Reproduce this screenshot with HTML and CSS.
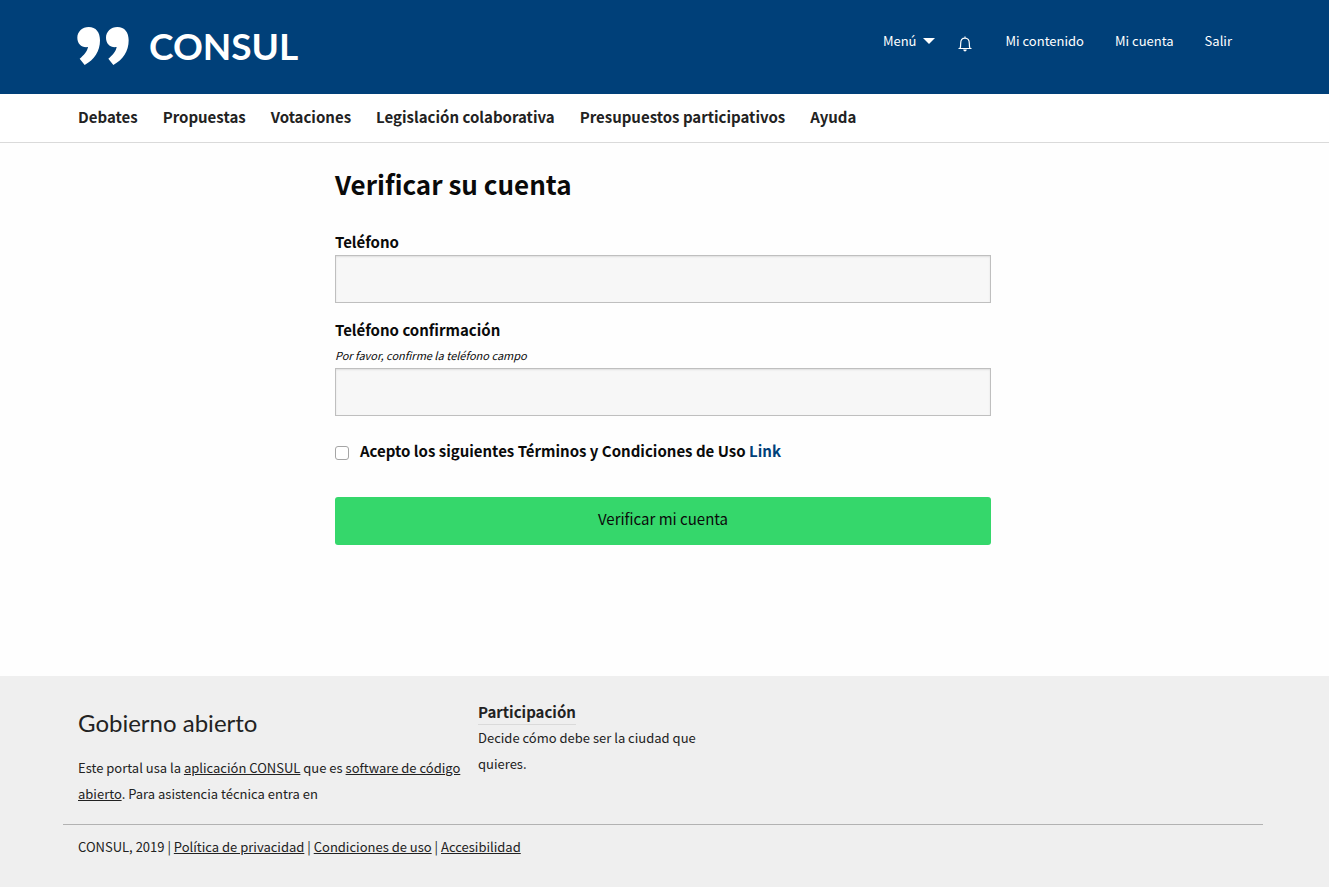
FILE: index.html
```html
<!DOCTYPE html>
<html lang="es">
<head>
<meta charset="utf-8">
<meta name="viewport" content="width=device-width, initial-scale=1">
<title>Verificar su cuenta</title>
<link rel="stylesheet" href="styles.css">
</head>
<body>
<header class="top">
  <div class="row top-row">
    <a class="logo" href="#">
      <svg class="logo-mark" viewBox="54 48 159 120" aria-hidden="true">
        <path id="quote" d="M86 51C108 51 120 67 120 91C120 124 103 150 74 165L59 146C71 136 82 124 84 111C65 114 52 101 52 83C52 65 67 51 86 51Z"/>
        <use href="#quote" x="86"/>
      </svg>
      <span>CONSUL</span>
    </a>
    <nav class="account" aria-label="Cuenta">
      <button class="menu" type="button">Menú <span class="caret"></span></button>
      <a class="bell" href="#" aria-label="Notificaciones">
        <svg viewBox="0 0 14 16" aria-hidden="true">
          <path d="M.5 12.500H13.500M2 12.500C2.700 11.300 2.700 10 2.700 7.200C2.700 4 4.300 2.200 7 2.200S11.300 4 11.300 7.200C11.300 10 11.300 11.300 12 12.500M7 .6V2.200"/>
          <path class="clapper" d="M5.200 13.500H8.800C8.400 16 5.600 16 5.200 13.500Z"/>
        </svg>
      </a>
      <a href="#">Mi contenido</a>
      <a href="#">Mi cuenta</a>
      <a href="#">Salir</a>
    </nav>
  </div>
</header>
<nav class="sections" aria-label="Secciones">
  <div class="row sections-row">
    <a href="#">Debates</a>
    <a href="#">Propuestas</a>
    <a href="#">Votaciones</a>
    <a href="#">Legislación colaborativa</a>
    <a href="#">Presupuestos participativos</a>
    <a href="#">Ayuda</a>
  </div>
</nav>
<main class="row">
  <form class="verify">
    <h1>Verificar su cuenta</h1>
    <label for="phone">Teléfono</label>
    <input class="field" id="phone" type="tel">
    <label for="phone-confirm">Teléfono confirmación</label>
    <p class="hint" id="confirm-hint">Por favor, confirme la teléfono campo</p>
    <input class="field" id="phone-confirm" type="tel" aria-describedby="confirm-hint">
    <div class="terms">
      <input id="terms" type="checkbox">
      <label for="terms">Acepto los siguientes Términos y Condiciones de Uso <a href="#">Link</a></label>
    </div>
    <button class="submit" type="submit">Verificar mi cuenta</button>
  </form>
</main>
<footer class="footer">
  <div class="row footer-row">
    <section class="about">
      <h2>Gobierno abierto</h2>
      <p>Este portal usa la <a href="#">aplicación CONSUL</a> que es <a href="#">software de código abierto</a>. Para asistencia técnica entra en</p>
    </section>
    <section class="participation">
      <a class="participation-title" href="#">Participación</a>
      <p>Decide cómo debe ser la ciudad que quieres.</p>
    </section>
  </div>
  <div class="legal-wrap">
    <div class="legal">CONSUL, 2019 | <a href="#">Política de privacidad</a> | <a href="#">Condiciones de uso</a> | <a href="#">Accesibilidad</a></div>
  </div>
</footer>
</body>
</html>
```
FILE: styles.css
```css
*, *::before, *::after { box-sizing: border-box; }

body {
  display: flex;
  flex-direction: column;
  min-height: 100vh;
  margin: 0;
  background: #fefefe;
  color: #0a0a0a;
  font: 15px/26px "Source Sans Pro", "Noto Sans CJK JP", sans-serif;
}

h1, h2, p { margin: 0; }
a { color: inherit; text-decoration: none; }
button { border: 0; font: inherit; cursor: pointer; }

.row {
  width: 100%;
  max-width: 1203px;
  margin: 0 auto;
  padding: 0 18px 0 15px;
}

.top { background: #004079; color: #fff; }
.top-row {
  display: flex;
  justify-content: space-between;
  min-height: 94px;
}
.logo {
  display: flex;
  align-items: center;
  gap: 18px;
  padding-bottom: 2px;
  font: bold 37px/40px Lato, sans-serif;
}
.logo-mark { width: 53px; height: 40px; fill: #fff; overflow: visible; }

.account {
  display: flex;
  align-items: center;
  gap: 31px;
  height: 26px;
  margin: 28px 16px 0 0;
  font-size: 13px;
}
.menu {
  display: flex;
  align-items: center;
  gap: 7px;
  padding: 0;
  background: none;
  color: inherit;
}
.caret {
  border: 6px solid transparent;
  border-top-color: #fff;
  border-bottom: 0;
}
.bell { display: flex; margin: 6px 2px 0 -8px; }
.bell svg {
  width: 14px;
  height: 16px;
  fill: none;
  stroke: #fff;
  stroke-width: 1.2;
}
.bell .clapper { fill: #fff; stroke: none; }

.sections { background: #fff; border-bottom: 1px solid #dadada; }
.sections-row {
  display: flex;
  flex-wrap: wrap;
  gap: 0 25px;
  padding-top: 10px;
  padding-bottom: 12px;
  color: #222;
  font-weight: bold;
}

main { flex: 1; }
.verify {
  display: flex;
  flex-direction: column;
  max-width: 656px;
  margin: 0 auto;
  padding: 22px 0;
}
.verify h1 {
  margin-bottom: 26px;
  font-size: 26px;
  line-height: 38px;
}
.verify label { font-weight: bold; }
.field {
  width: 100%;
  height: 48px;
  margin-bottom: 14px;
  padding: 8px;
  border: 1px solid #bfbfbf;
  border-radius: 0;
  background: #f7f7f7;
  box-shadow: inset 0 1px 2px rgba(10, 10, 10, .1);
  font: inherit;
}
.hint { font-size: 11px; font-style: italic; line-height: 25px; }
.terms {
  display: flex;
  align-items: center;
  gap: 11px;
  margin: 8px 0 33px;
}
.terms input {
  appearance: none;
  width: 14px;
  height: 14px;
  margin: 3px 0 0;
  border: 1px solid #a5a5a5;
  border-radius: 3px;
  background: #fff;
}
.terms input:checked { background: #004079; }
.terms a { color: #004079; }
.submit {
  height: 48px;
  padding: 0 16px 4px;
  border-radius: 3px;
  background: #35d76b;
  color: #0a0a0a;
}

.footer {
  padding: 24px 0 27px;
  background: #efefef;
  color: #222;
  font-size: 13px;
}
.footer-row { display: flex; gap: 16px; }
.about { flex: 0 1 384px; }
.about h2 {
  padding-top: 3px;
  margin-bottom: 12px;
  font: 24px/40px Lato, sans-serif;
}
.about a, .legal a { text-decoration: underline; }
.participation { flex: 0 1 240px; }
.participation-title {
  display: block;
  width: fit-content;
  border-bottom: 1px solid #dadada;
  font-size: 15px;
  font-weight: bold;
  line-height: 24px;
}
.legal-wrap {
  width: 100%;
  max-width: 1203px;
  margin: 17px auto 0;
  padding-right: 3px;
}
.legal {
  padding: 9px 15px 0;
  border-top: 1px solid #b2b2b2;
}
```
